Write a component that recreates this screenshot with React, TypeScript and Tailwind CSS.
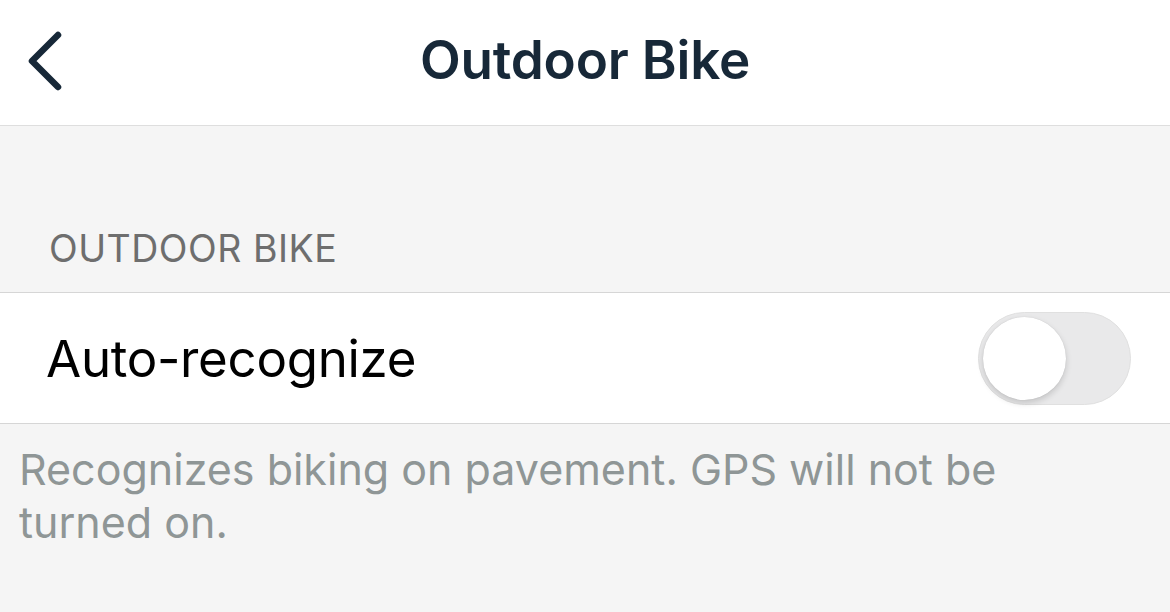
import React from "react";

function BackChevron() {
  return (
    <svg width="40" height="64" viewBox="0 0 40 64" fill="none">
      <path
        d="M31 6 L5 32 L31 58"
        stroke="#172838"
        strokeWidth="6.5"
        strokeLinecap="round"
        strokeLinejoin="round"
      />
    </svg>
  );
}

function Toggle() {
  return (
    <div className="relative w-[153px] h-[93px] rounded-full bg-[#e9e9ea] border border-[#e0e0e0]">
      <div className="absolute left-[4px] top-[4px] w-[83px] h-[83px] rounded-full bg-white shadow-[0_3px_6px_rgba(0,0,0,0.16),0_0_1px_rgba(0,0,0,0.15)]" />
    </div>
  );
}

export default function App() {
  return (
    <div
      className="w-[1170px] h-[612px] bg-[#f5f5f5] overflow-hidden"
      style={{ fontFamily: "Inter, 'Noto Sans', sans-serif" }}
    >
      <header className="relative h-[126px] bg-white border-b border-[#dedede] flex items-center justify-center">
        <div className="absolute left-[27px] top-[29px]">
          <BackChevron />
        </div>
        <h1 className="text-[53px] font-semibold text-[#172838] tracking-[-0.2px] mt-[-4px]">
          Outdoor Bike
        </h1>
      </header>

      <div className="h-[166px] flex items-end pb-[21px] pl-[49px]">
        <span className="text-[37.5px] leading-[44px] text-[#6e6e6e] tracking-[0.5px]">OUTDOOR BIKE</span>
      </div>

      <div className="h-[132px] bg-white border-y border-[#d6d6d6] flex items-center justify-between pl-[46px] pr-[39px]">
        <span className="text-[51px] text-black tracking-[-0.3px] mt-[2px]">Auto-recognize</span>
        <Toggle />
      </div>

      <p className="pl-[19px] pr-[120px] pt-[19px] text-[43px] leading-[53px] text-[#8f9696]">
        Recognizes biking on pavement. GPS will not be turned on.
      </p>
    </div>
  );
}
